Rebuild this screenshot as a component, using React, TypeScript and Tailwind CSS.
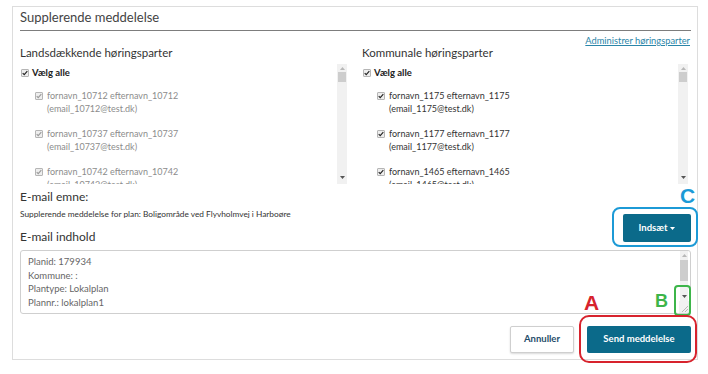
import React from 'react';

type Person = { id: string; disabled?: boolean };

const landsdaekkende: Person[] = [
  { id: '10712', disabled: true },
  { id: '10737', disabled: true },
  { id: '10742', disabled: true },
];

const kommunale: Person[] = [{ id: '1175' }, { id: '1177' }, { id: '1465' }];

const mailLines = [
  'Planid: 179934',
  'Kommune: :',
  'Plantype: Lokalplan',
  'Plannr.: lokalplan1',
  'Plannavn: Boligområde ved Flyvholmvej i Harboøre',
];

const Check: React.FC<{ disabled?: boolean }> = ({ disabled }) => (
  <span className="flex h-[8px] w-[8px] shrink-0 items-center justify-center rounded-[1px] border border-[#b5b5b5] bg-[#eeeeee]">
    <svg width="7" height="6" viewBox="0 0 7 6">
      <path
        d="M0.8 3.2 L2.6 5 L6.2 0.9"
        fill="none"
        stroke={disabled ? '#9a9a9a' : '#222'}
        strokeWidth="1.3"
      />
    </svg>
  </span>
);

const Arrow: React.FC<{ up?: boolean }> = ({ up }) => (
  <svg width="5" height="3" viewBox="0 0 5 3">
    <path d={up ? 'M0 3 L2.5 0 L5 3 Z' : 'M0 0 L2.5 3 L5 0 Z'} fill={up ? '#b8b8b8' : '#555'} />
  </svg>
);

const Scrollbar: React.FC = () => (
  <div className="flex w-[10px] shrink-0 flex-col items-center bg-[#f1f1f1]">
    <div className="mt-[3px]">
      <Arrow up />
    </div>
    <div className="mt-[2px] h-[10px] w-[8px] bg-[#cdcdcd]" />
    <div className="flex-1" />
    <div className="mb-[5px]">
      <Arrow />
    </div>
  </div>
);

const PartyList: React.FC<{ people: Person[]; right?: boolean }> = ({ people, right }) => (
  <div className="mt-[4px] flex h-[120px]">
    <div className="flex-1 overflow-hidden pt-[3px]">
      <div className="flex h-[12px] items-center pl-[1px]">
        <Check />
        <span className="ml-[3px] text-[9.5px] font-bold text-[#222]">Vælg alle</span>
      </div>
      {people.map((p, i) => (
        <div
          key={p.id}
          className={`flex pl-[15px] ${i === 0 ? 'mt-[10px]' : 'mt-[12px]'}`}
        >
          <div className="pt-[3px]">
            <Check disabled={p.disabled} />
          </div>
          <div
            className={`ml-[4px] text-[9px] leading-[13px] ${
              p.disabled ? 'text-[#8c8c8c]' : 'text-[#333]'
            }`}
          >
            <div>
              fornavn_{p.id} efternavn_{p.id}
            </div>
            <div>(email_{p.id}@test.dk)</div>
          </div>
        </div>
      ))}
    </div>
    <div className={right ? 'mr-[2px] flex' : 'flex'}>
      <Scrollbar />
    </div>
  </div>
);

const App: React.FC = () => {
  return (
    <div className="relative h-[374px] w-[708px] overflow-hidden bg-white font-['Lato',sans-serif]">
      <div className="ml-[12px] mt-[6px] h-[354px] w-[686px] border border-[#dddddd] pl-[7px] pr-[6px]">
        <div className="border-b border-[#7d7d7d] pb-[3px] text-[13px] leading-[20px] text-[#444]">
          Supplerende meddelelse
        </div>

        <div className="grid grid-cols-[327px_328px] gap-x-[15px] pt-[5px]">
          <div>
            <div className="mt-[10px] text-[11.5px] leading-[14px] text-[#333]">
              Landsdækkende høringsparter
            </div>
            <PartyList people={landsdaekkende} />
          </div>
          <div>
            <div className="h-[10px] text-right text-[9.3px] leading-[10px]">
              <a href="#" className="text-[#2a85a8] underline">
                Administrer høringsparter
              </a>
            </div>
            <div className="text-[11.5px] leading-[14px] text-[#333]">Kommunale høringsparter</div>
            <PartyList people={kommunale} right />
          </div>
        </div>

        <div className="flex items-end justify-between">
          <div>
            <div className="mt-[5px] text-[12px] leading-[16px] text-[#333]">E-mail emne:</div>
            <div className="mt-[3px] text-[8.3px] leading-[12px] text-[#333]">
              Supplerende meddelelse for plan: Boligområde ved Flyvholmvej i Harboøre
            </div>
            <div className="mt-[9px] text-[12px] leading-[16px] text-[#333]">E-mail indhold</div>
          </div>
          <button className="mb-[3px] flex h-[28px] w-[68px] items-center justify-center gap-[3px] rounded-[2px] bg-[#0b6a8a] text-[9.5px] font-bold text-white">
            Indsæt
            <svg width="5" height="3" viewBox="0 0 5 3">
              <path d="M0 0 L2.5 3 L5 0 Z" fill="#fff" />
            </svg>
          </button>
        </div>

        <div className="mt-[5px] flex h-[64px] rounded-[3px] border border-[#cfcfcf]">
          <div className="flex-1 overflow-hidden pl-[7px] pt-[4px] text-[9.5px] leading-[13.7px] text-[#666]">
            {mailLines.map((l) => (
              <div key={l}>{l}</div>
            ))}
          </div>
          <div className="mr-[1px] flex w-[10px] flex-col items-center">
            <div className="flex flex-1 flex-col items-center bg-[#f1f1f1]">
              <div className="mt-[3px]">
                <Arrow up />
              </div>
              <div className="mt-[3px] h-[21px] w-[8px] bg-[#cdcdcd]" />
              <div className="flex-1" />
              <div className="mb-[3px]">
                <Arrow />
              </div>
            </div>
            <div className="h-[12px] w-[10px] bg-[#f1f1f1]">
              <svg width="10" height="12" viewBox="0 0 10 12">
                <path d="M3 11 L9 5 M6 11 L9 8" stroke="#aaa" strokeWidth="0.8" />
              </svg>
            </div>
          </div>
        </div>

        <div className="mt-[12px] flex justify-end gap-[13px]">
          <button className="h-[27px] w-[64px] rounded-[2px] border border-[#cfcfcf] bg-white text-[9.5px] font-bold text-[#1f4d6b] shadow-[0_1px_2px_rgba(0,0,0,0.15)]">
            Annuller
          </button>
          <button className="h-[27px] w-[104px] rounded-[2px] bg-[#0b6a8a] text-[9.5px] font-bold text-white">
            Send meddelelse
          </button>
        </div>
      </div>

      {/* annotations */}
      <div className="absolute left-[680px] top-[185px] font-['Liberation_Sans',sans-serif] text-[21px] font-bold leading-none text-[#1c9ad6]">
        C
      </div>
      <div className="absolute left-[612px] top-[207px] h-[40px] w-[86px] rounded-[8px] border-[2.5px] border-[#1c9ad6]" />
      <div className="absolute left-[655px] top-[292px] font-['Liberation_Sans',sans-serif] text-[18px] font-bold leading-none text-[#3db54a]">
        B
      </div>
      <div className="absolute left-[674px] top-[285px] h-[31px] w-[17px] rounded-[4px] border-2 border-[#3db54a]" />
      <div className="absolute left-[584px] top-[292px] font-['Liberation_Sans',sans-serif] text-[21px] font-bold leading-none text-[#d7232d]">
        A
      </div>
      <div className="absolute left-[579px] top-[315px] h-[48px] w-[118px] rounded-[10px] border-[2.5px] border-[#d7232d]" />
    </div>
  );
};

export default App;
